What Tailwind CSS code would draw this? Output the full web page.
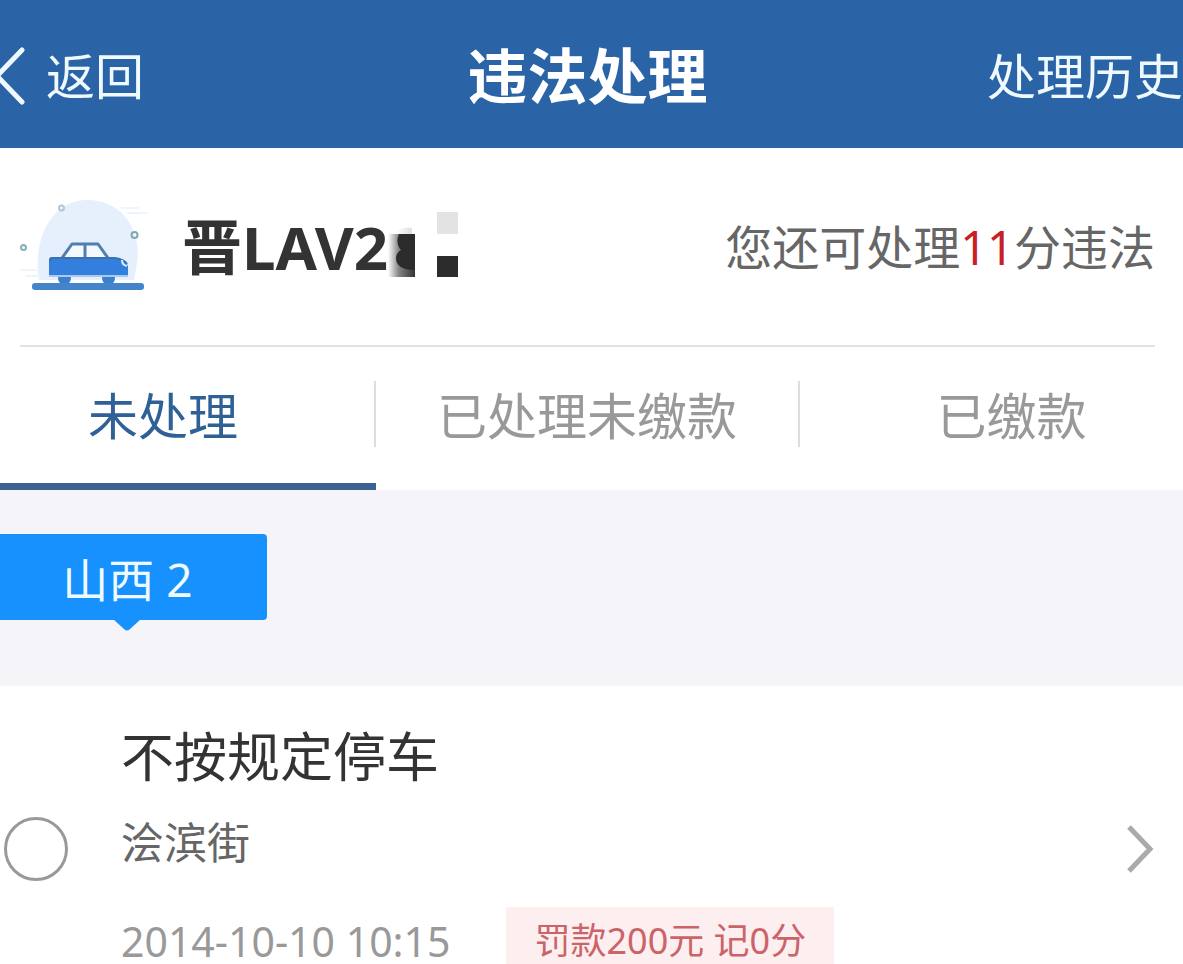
<!DOCTYPE html>
<html lang="zh-CN">
<head>
    <meta charset="UTF-8">
    <meta name="viewport" content="width=device-width, initial-scale=1.0">
    <title>违法处理</title>
    <script src="https://cdn.jsdelivr.net/npm/@tailwindcss/browser@4"></script>
</head>
<body class="bg-white font-['Noto_Sans','Noto_Sans_CJK_SC',sans-serif] overflow-x-hidden">
    <!-- top bar -->
    <header class="grid grid-cols-[1fr_auto_1fr] items-center h-[148px] pt-1 bg-[#2a63a6] text-white whitespace-nowrap">
        <a href="#" class="flex items-center gap-5 text-[49px] leading-[64px] text-[#eefaff]">
            <svg class="w-[26px] h-[60px]" viewBox="0 0 26 60" fill="none" stroke="currentColor" stroke-width="5" stroke-linecap="round" stroke-linejoin="round" aria-hidden="true">
                <path d="M22 4 L-3 30 L22 56"/>
            </svg>
            返回
        </a>
        <h1 class="pr-2 text-[60px] leading-[72px] font-bold">违法处理</h1>
        <a href="#" class="justify-self-end text-[49px] leading-[64px] text-[#eefaff]">处理历史</a>
    </header>

    <!-- vehicle -->
    <section class="flex items-center justify-between ml-5 mr-7 h-[199px] border-b-2 border-[#e2e2e2] whitespace-nowrap">
        <div class="flex items-center">
            <svg class="w-[130px] h-[100px]" viewBox="20 18 130 100" fill="none" aria-hidden="true">
                <path d="M39 101 C32 60 52 21 87 21 C121 21 142 50 137 84 L134 101 Z" fill="#e6effc"/>
                <path d="M122 29 H138 M128 34 H147 M20 91 H36 M26 97 H40" stroke="#eff5fc" stroke-width="2" stroke-linecap="round"/>
                <path d="M63 79 L72 65 H98 L108 79 Z" fill="#f4f9ff"/>
                <path d="M62 79 L72 65 H98 L108 79 M85 65 V79" stroke="#4f7fae" stroke-width="3" stroke-linejoin="round"/>
                <path d="M52 78 H112 Q126 79 128 87 V97 H49 V81 Q49 78 52 78 Z" fill="#337fdd"/>
                <path d="M49 97 H128" stroke="#a9c9f0" stroke-width="2"/>
                <path d="M50 82 Q50 79 53 79 H114 Q124 80 127 85" stroke="#3c70b0" stroke-width="2"/>
                <path d="M122 81 Q122 86 127 87" stroke="#dcecff" stroke-width="2"/>
                <path d="M58 98 H71 Q71 104 67 105 H62 Q58 104 58 98 Z M102 98 H115 Q115 104 111 105 H106 Q102 104 102 98 Z" fill="#3b7fcd"/>
                <rect x="32" y="104" width="112" height="7" rx="3" fill="#4583cb"/>
                <g stroke-width="2">
                    <circle cx="61.500" cy="29" r="2.500" stroke="#b5c6d3"/>
                    <circle cx="134.500" cy="56" r="3" stroke="#82a6b5"/>
                    <circle cx="23.500" cy="68.500" r="2.500" stroke="#8bb0b2"/>
                </g>
            </svg>
            <div class="flex items-center ml-8">
                <span class="text-[60px] leading-[72px] font-bold text-[#333]">晋LAV2</span>
                <!-- masked part of the plate number -->
                <svg class="w-[76px] h-[72px] -ml-1" viewBox="384 211 76 72" aria-hidden="true">
                    <defs>
                        <linearGradient id="mask" x1="0" x2="1">
                            <stop offset="0" stop-color="#333" stop-opacity="0"/>
                            <stop offset="0.400" stop-color="#333" stop-opacity="0.600"/>
                            <stop offset="1" stop-color="#333"/>
                        </linearGradient>
                        <linearGradient id="puff" x1="0" x2="1">
                            <stop offset="0" stop-color="#888" stop-opacity="0"/>
                            <stop offset="1" stop-color="#999" stop-opacity="0.300"/>
                        </linearGradient>
                    </defs>
                    <path d="M396 234 Q400 226 412 228 V234 Z" fill="url(#puff)"/>
                    <rect x="388" y="234" width="27" height="43" fill="url(#mask)"/>
                    <path d="M399 234 H415 V270 Q396 270 396 258 Q396 253 401 250 Q395 243 399 234 Z" fill="#2c2c2c"/>
                    <rect x="437" y="212" width="21" height="22" fill="#e3e3e3"/>
                    <rect x="437" y="256" width="21" height="21" fill="#2c2c2c"/>
                </svg>
            </div>
        </div>
        <p class="text-[47px] leading-[64px] text-[#666]">您还可处理<span class="text-[#c81e28]">11</span>分违法</p>
    </section>

    <!-- tabs -->
    <nav class="grid grid-cols-[376fr_424fr_383fr] h-[143px] text-[50px] leading-[64px] text-[#999] whitespace-nowrap">
        <button type="button" class="flex items-start text-[#2f6196] border-b-[7px] border-[#3a648f]">
            <span class="flex items-center justify-center w-full h-[66px] mt-[34px] pt-1 pr-12 border-r-2 border-[#ddd]">未处理</span>
        </button>
        <button type="button" class="flex items-start">
            <span class="flex items-center justify-center w-full h-[66px] mt-[34px] pt-1 border-r-2 border-[#ddd]">已处理未缴款</span>
        </button>
        <button type="button" class="flex items-start">
            <span class="flex items-center justify-center w-full h-[66px] mt-[34px] pt-1 pl-10">已缴款</span>
        </button>
    </nav>

    <!-- province filter -->
    <div class="h-[196px] pt-11 bg-[#f4f4f9]">
        <button type="button" class="relative block w-[267px] h-[86px] pt-1 pr-3 rounded-r-sm bg-[#1691fd] text-[46px] leading-[64px] text-[#eefaff]">
            山西 2
            <svg class="absolute left-[113px] top-[85px] w-7 h-3" viewBox="0 0 28 12" fill="#1691fd" aria-hidden="true">
                <path d="M0 0 H28 L17 10 Q14 13 11 10 Z"/>
            </svg>
        </button>
    </div>

    <!-- violations -->
    <ul class="bg-white">
        <li class="flex items-center pl-1 pr-7 py-[37px]">
            <input type="checkbox" id="item1" class="appearance-none shrink-0 w-16 h-16 rounded-full border-3 border-[#999] bg-white checked:bg-[#1691fd]">
            <label for="item1" class="flex-1 ml-[53px] whitespace-nowrap">
                <span class="block text-[53px] leading-[68px] text-[#333]">不按规定停车</span>
                <span class="block mt-6 text-[43px] leading-[56px] text-[#666]">浍滨街</span>
                <span class="flex items-center mt-9">
                    <time datetime="2014-10-10T10:15" class="text-[41px] leading-[56px] text-[#999]">2014-10-10 10:15</time>
                    <span class="ml-14 px-7 text-[36px] leading-[68px] bg-[#fdeff0] text-[#cb6468]">罚款200元 记0分</span>
                </span>
            </label>
            <a href="#" aria-label="查看详情">
                <svg class="w-7 h-12" viewBox="0 0 28 48" fill="none" stroke="#aaa" stroke-width="5" aria-hidden="true">
                    <path d="M2 2 L23 24 L2 46"/>
                </svg>
            </a>
        </li>
    </ul>
</body>
</html>
